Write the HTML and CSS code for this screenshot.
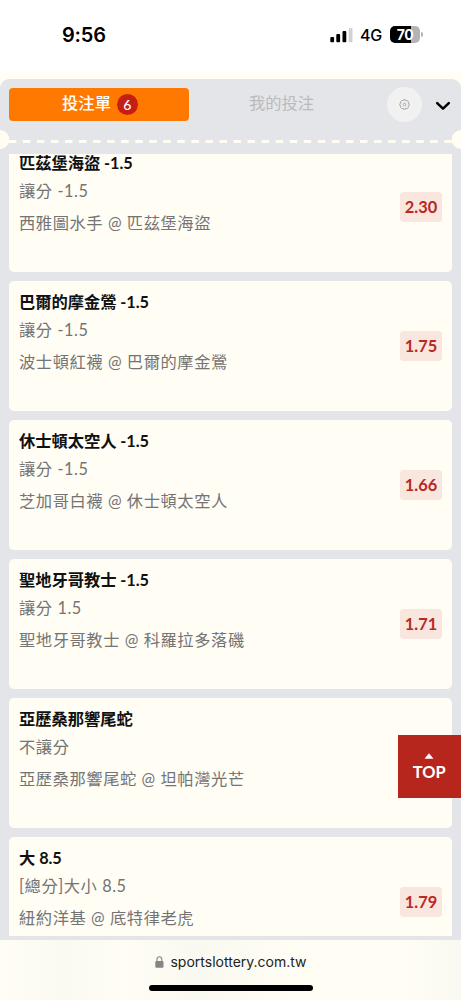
FILE: index.html
```html
<!DOCTYPE html>
<html lang="zh-Hant">
<head>
<meta charset="utf-8">
<meta name="viewport" content="width=device-width">
<title>投注單</title>
<link rel="stylesheet" href="styles.css">
</head>
<body>
<div class="phone">
  <div class="status">
    <span class="time">9:56</span>
    <svg class="signal" width="24" height="16" viewBox="0 0 24 16">
      <rect x="0.3" y="10" width="3.8" height="5.3" rx="1"/>
      <rect x="6.3" y="7" width="3.8" height="8.3" rx="1"/>
      <rect x="12.5" y="4" width="3.8" height="11.3" rx="1"/>
      <rect x="18.7" y="1" width="3.8" height="14.3" rx="1" fill="#d2d2d2"/>
    </svg>
    <span class="network">4G</span>
    <span class="battery">70</span><span class="battery-tip"></span>
  </div>
  <main class="panel">
    <header class="tabs">
      <div class="tab active"><span class="label">投注單</span><span class="count">6</span></div>
      <div class="tab"><span class="label">我的投注</span></div>
      <div class="settings">
        <svg width="11" height="11" viewBox="0 0 11 11" fill="none" stroke="#a2a2a2" stroke-width="0.9" stroke-linejoin="round">
          <path d="M4.6.7h1.8l.5 1.2 1.3-.5 1.3 1.3L9 4l1.2.6v1.8L9 7l.5 1.3-1.3 1.3-1.3-.5-.5 1.2H4.6l-.5-1.2-1.3.5-1.3-1.3L2 7 .8 6.400V4.600L2 4l-.5-1.300 1.300-1.300 1.300.5z"/>
          <circle cx="5.500" cy="5.500" r="1.300"/>
        </svg>
      </div>
      <svg class="chevron" width="16" height="10" viewBox="0 0 16 10" fill="none" stroke="#000" stroke-width="2.5" stroke-linecap="round" stroke-linejoin="round"><path d="M2.2 2.2 8 7.6l5.8-5.4"/></svg>
    </header>
    <div class="tear"></div>
    <section class="list">
      <article class="card"><div class="info"><h2>匹茲堡海盜 -1.5</h2><p class="kind">讓分 -1.5</p><p class="match">西雅圖水手 @ 匹茲堡海盜</p></div><span class="odds">2.30</span></article>
      <article class="card"><div class="info"><h2>巴爾的摩金鶯 -1.5</h2><p class="kind">讓分 -1.5</p><p class="match">波士頓紅襪 @ 巴爾的摩金鶯</p></div><span class="odds">1.75</span></article>
      <article class="card"><div class="info"><h2>休士頓太空人 -1.5</h2><p class="kind">讓分 -1.5</p><p class="match">芝加哥白襪 @ 休士頓太空人</p></div><span class="odds">1.66</span></article>
      <article class="card"><div class="info"><h2>聖地牙哥教士 -1.5</h2><p class="kind">讓分 1.5</p><p class="match">聖地牙哥教士 @ 科羅拉多落磯</p></div><span class="odds">1.71</span></article>
      <article class="card"><div class="info"><h2>亞歷桑那響尾蛇</h2><p class="kind">不讓分</p><p class="match">亞歷桑那響尾蛇 @ 坦帕灣光芒</p></div></article>
      <article class="card"><div class="info"><h2>大 8.5</h2><p class="kind">[總分]大小 8.5</p><p class="match">紐約洋基 @ 底特律老虎</p></div><span class="odds">1.79</span></article>
    </section>
  </main>
  <footer class="browser">
    <div class="address">
      <svg width="9" height="12" viewBox="0 0 9 12"><rect x="0.3" y="5" width="8.2" height="6.8" rx="1.2" fill="#858585"/><path d="M2 5.5V3.2a2.4 2.4 0 0 1 4.8 0v2.3" fill="none" stroke="#858585" stroke-width="1.1"/></svg>
      <span>sportslottery.com.tw</span>
    </div>
    <div class="home"></div>
  </footer>
  <div class="to-top">
    <svg width="10" height="6" viewBox="0 0 10 6"><path d="M5 .2 9.5 5.700h-9z" fill="#fff"/></svg>
    <span>TOP</span>
  </div>
</div>
</body>
</html>
```
FILE: styles.css
```css
* { box-sizing: border-box; }
body { margin: 0; background: #fffdf4; font-family: Lato, "Noto Sans CJK TC", sans-serif; }
h2, p { margin: 0; }
.phone { position: relative; width: 461px; height: 1000px; overflow: hidden; display: flex; flex-direction: column; }

.status { height: 72px; flex: none; background: #fff; display: flex; align-items: center; padding: 0 38px 3px 62px; font-family: Inter, sans-serif; }
.time { width: 268px; font-size: 20px; font-weight: 600; line-height: 24px; letter-spacing: -0.2px; }
.network { width: 30px; margin-left: 6px; font-size: 16px; font-weight: 500; letter-spacing: -0.2px; }
.battery { width: 30px; height: 17px; border-radius: 5px; background: linear-gradient(90deg, #000 71%, #b4b4b4 71%); color: #fff; font-size: 14px; font-weight: 700; line-height: 17px; text-align: center; letter-spacing: -0.5px; }
.battery-tip { width: 2px; height: 5px; margin-left: 1px; border-radius: 0 2px 2px 0; background: #b4b4b4; }

.panel { margin-top: 7px; height: 861px; flex: none; background: #e4e5e8; border-radius: 9px 9px 0 0; display: flex; flex-direction: column; }
.tabs { height: 51px; flex: none; display: flex; align-items: center; padding: 0 10px 0 9px; }
.tab { width: 180px; height: 33px; display: flex; align-items: center; justify-content: center; font-size: 16.3px; line-height: 24px; color: #b9babc; padding-left: 5px; }
.label { padding-bottom: 3px; }
.tab.active { background: #ff7900; color: #fff; font-weight: 500; border-radius: 4px; padding-left: 2px; }
.count { width: 21px; height: 21px; margin-left: 6px; border-radius: 50%; background: #c51e14; font-size: 14px; line-height: 21px; text-align: center; }
.settings { width: 35px; height: 35px; margin-left: 18px; border-radius: 50%; background: #f1f1f2; display: flex; align-items: center; justify-content: center; }
.chevron { margin-left: 13px; margin-top: 2px; }

.tear { height: 19px; flex: none; background:
  radial-gradient(circle at 0 50%, #fffdf4 9px, transparent 9.6px),
  radial-gradient(circle at 100% 50%, #fffdf4 9px, transparent 9.6px),
  linear-gradient(90deg, #fffdf4 7.2px, transparent 7.2px) 8.8px 9.6px / 14.06px 2.5px repeat-x; }

.list { height: 781.5px; margin: 5px 9px 0; flex: none; overflow: hidden; display: flex; flex-direction: column; gap: 9px; }
.card { height: 130px; flex: none; background: #fffdf4; border-radius: 5px; padding: 9px 10px 0; display: flex; justify-content: space-between; }
.card:first-child { margin-top: -12px; }
.info { white-space: nowrap; }
h2 { font-size: 16.3px; line-height: 24px; font-weight: 700; letter-spacing: -0.05px; color: #111; }
.kind, .match { font-size: 16.3px; line-height: 24px; letter-spacing: 0.56px; color: #747474; }
.kind { margin-top: 4px; }
.match { margin-top: 8px; }
.odds { width: 42px; height: 30px; margin-top: 41px; border-radius: 4px; background: #f8e6df; color: #b9291f; font-size: 16.4px; font-weight: 700; line-height: 30px; text-align: center; }

.browser { height: 60px; flex: none; background: linear-gradient(90deg, #fffdf4, #fbfaf2 14%, #fffdf4 27%, #faf9f1 42%, #fffdf4 65%, #fffdf4 88%, #faf9f1); display: flex; flex-direction: column; align-items: center; }
.address { height: 44px; display: flex; align-items: center; gap: 6px; padding-left: 1px; font: 14px/18px Inter, sans-serif; color: #222; }
.home { width: 164px; height: 6px; margin-top: 1px; border-radius: 3px; background: #000; }

.to-top { position: absolute; right: 0; top: 735px; width: 63.5px; height: 63px; background: #b7261c; color: #fff; display: flex; flex-direction: column; align-items: center; padding-top: 18px; font-size: 16.4px; font-weight: 700; line-height: 20px; }
.to-top span { margin-top: 3px; }
```
